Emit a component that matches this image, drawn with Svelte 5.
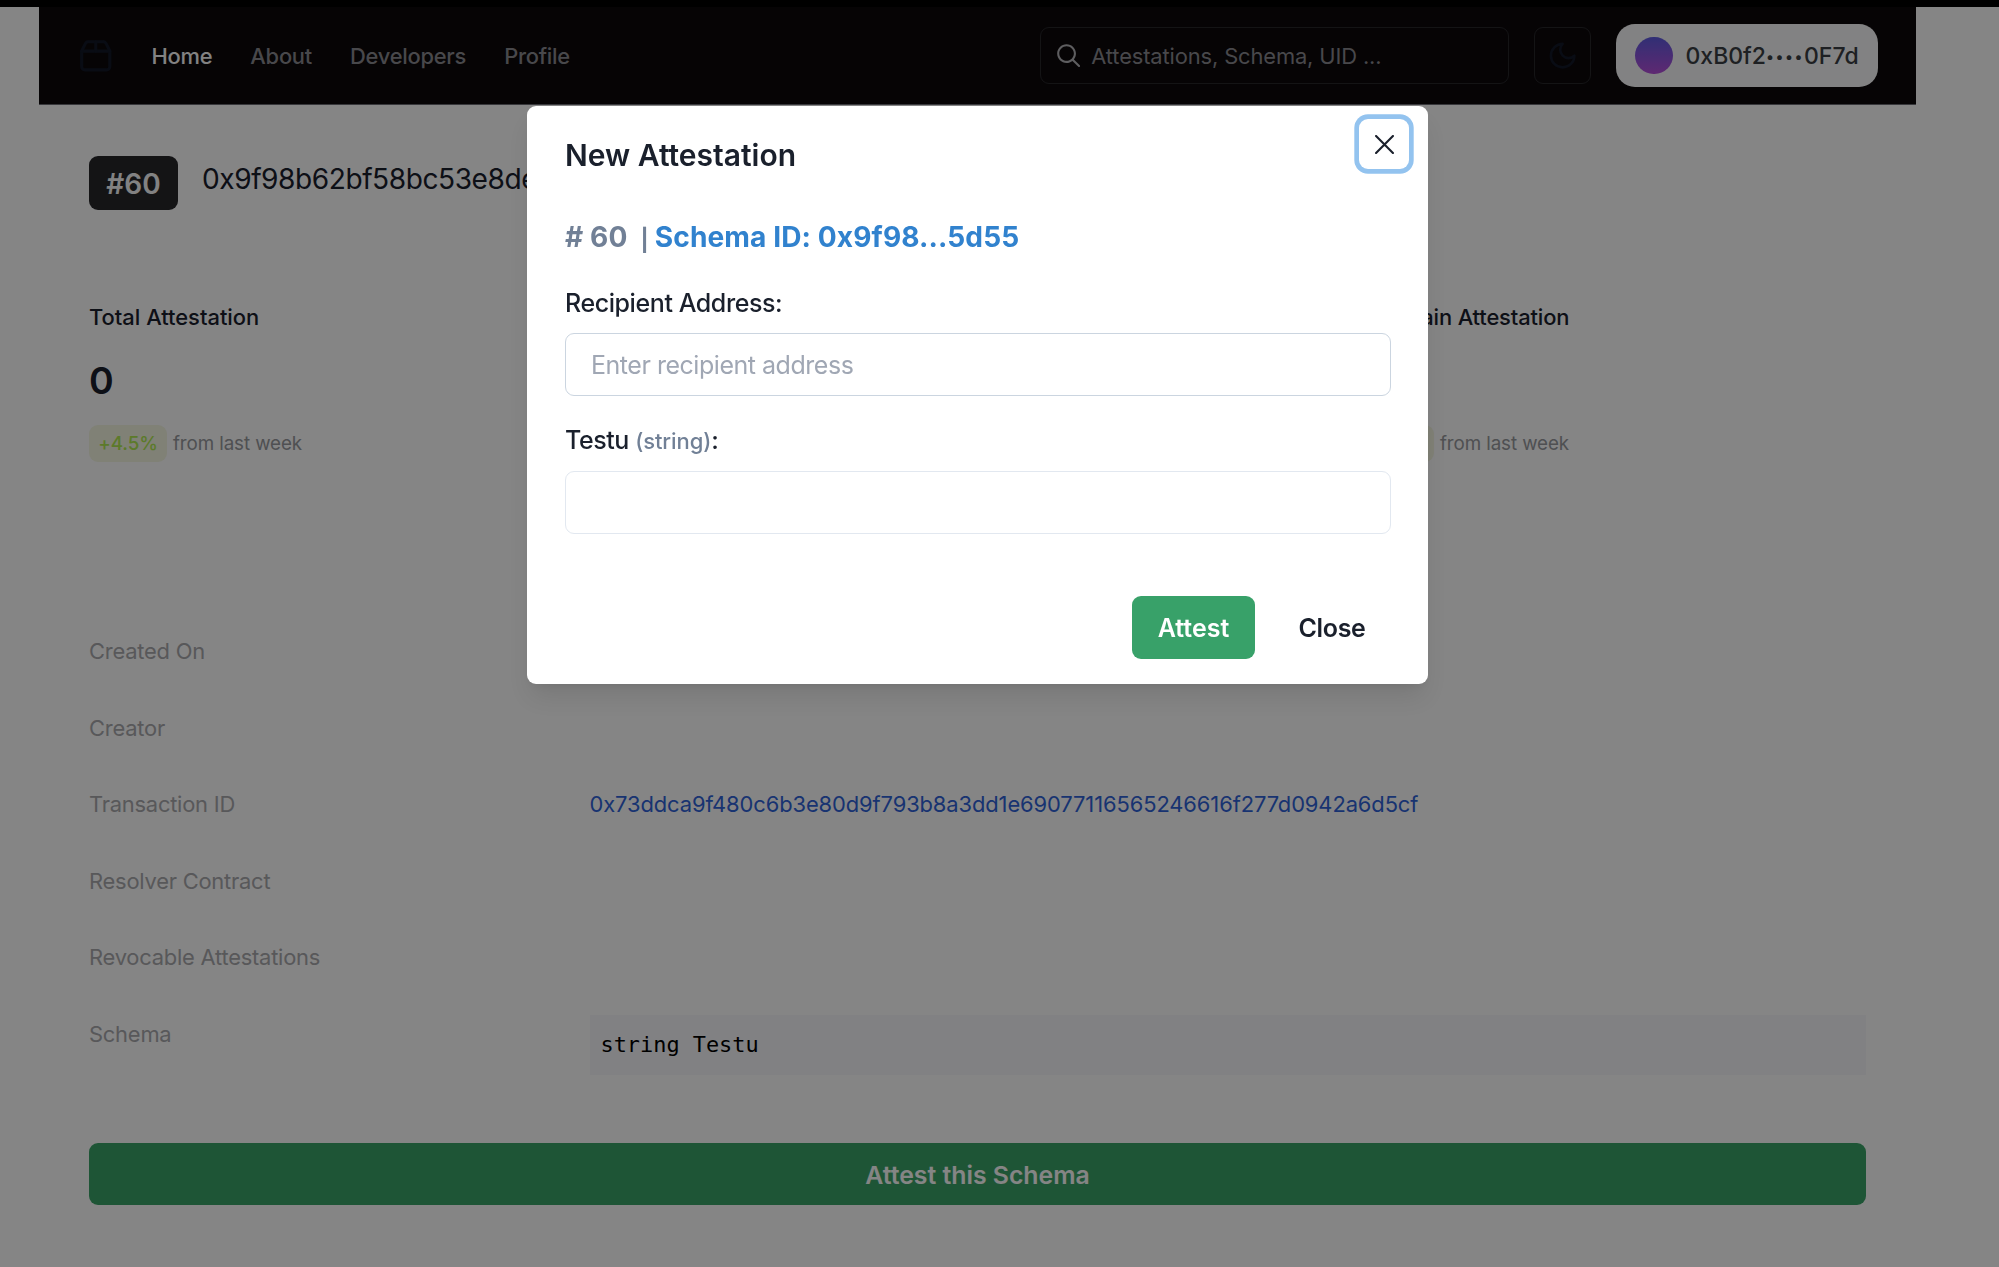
<script>
  const nav = ['Home', 'About', 'Developers', 'Profile'];
  const stats = [
    { label: 'Total Attestation', value: '0' },
    { label: 'On-chain Attestation', value: '' }
  ];
  const details = [
    { label: 'Created On' },
    { label: 'Creator' },
    { label: 'Transaction ID', link: '0x73ddca9f480c6b3e80d9f793b8a3dd1e69077116565246616f277d0942a6d5cf' },
    { label: 'Resolver Contract' },
    { label: 'Revocable Attestations' },
    { label: 'Schema', code: 'string Testu' }
  ];
</script>

<div class="page">
  <header>
    <svg class="logo" viewBox="0 0 24 24" fill="none" stroke="currentColor" stroke-width="2" stroke-linecap="round" stroke-linejoin="round">
      <path d="M3 9h18v10a2 2 0 0 1-2 2H5a2 2 0 0 1-2-2V9Z" />
      <path d="m3 9 2.45-4.9A2 2 0 0 1 7.24 3h9.52a2 2 0 0 1 1.8 1.1L21 9" />
      <path d="M12 3v6" />
    </svg>
    <nav>
      {#each nav as item, i}
        <span class:active={i === 0}>{item}</span>
      {/each}
    </nav>
    <div class="search">
      <svg viewBox="0 0 15 15" fill="currentColor">
        <path fill-rule="evenodd" clip-rule="evenodd" d="M10 6.5C10 8.433 8.433 10 6.5 10C4.567 10 3 8.433 3 6.5C3 4.567 4.567 3 6.5 3C8.433 3 10 4.567 10 6.5ZM9.309 10.016C8.53 10.632 7.544 11 6.5 11C4.015 11 2 8.985 2 6.5C2 4.015 4.015 2 6.5 2C8.985 2 11 4.015 11 6.5C11 7.544 10.632 8.53 10.016 9.309L12.854 12.146C13.049 12.342 13.049 12.658 12.854 12.854C12.658 13.049 12.342 13.049 12.146 12.854L9.309 10.016Z" />
      </svg>
      <span>Attestations, Schema, UID ...</span>
    </div>
    <div class="theme">
      <svg viewBox="0 0 24 24" fill="none" stroke="currentColor" stroke-width="2" stroke-linecap="round" stroke-linejoin="round">
        <path d="M12 3a6 6 0 0 0 9 9 9 9 0 1 1-9-9Z" />
      </svg>
    </div>
    <div class="wallet"><i></i><span>0xB0f2<em>••••</em>0F7d</span></div>
  </header>

  <main>
    <div class="heading">
      <span class="num">#60</span>
      <span class="hash">0x9f98b62bf58bc53e8de</span>
    </div>

    <div class="stats">
      {#each stats as s}
        <div class="stat">
          <div class="stat-label">{s.label}</div>
          <div class="stat-value">{s.value}</div>
          <div class="trend"><b>+4.5%</b><span>from last week</span></div>
        </div>
      {/each}
    </div>

    <div class="details">
      {#each details as d}
        <div class="row">
          <span class="key">{d.label}</span>
          {#if d.link}<span class="link">{d.link}</span>{/if}
          {#if d.code}<code>{d.code}</code>{/if}
        </div>
      {/each}
    </div>

    <button class="attest-schema">Attest this Schema</button>
  </main>
</div>

<div class="overlay"></div>

<section class="modal">
  <button class="x" aria-label="Close dialog">
    <svg viewBox="0 0 18 18" fill="none" stroke="currentColor" stroke-width="2" stroke-linecap="round">
      <path d="M1 1 17 17M17 1 1 17" />
    </svg>
  </button>
  <h2>New Attestation</h2>
  <div class="schema"><span class="id"># 60</span><span class="bar">|</span><span class="sid">Schema ID: 0x9f98...5d55</span></div>
  <label class="field">
    <span class="lab">Recipient Address:</span>
    <input placeholder="Enter recipient address" />
  </label>
  <label class="field soft">
    <span class="lab">Testu <small>(string)</small>:</span>
    <input />
  </label>
  <div class="actions">
    <button class="attest">Attest</button>
    <button class="close">Close</button>
  </div>
</section>

<style>
  :global(body) {
    margin: 0;
    overflow: hidden;
    background: #fff;
    font-family: Inter, 'Liberation Sans', sans-serif;
  }
  .page {
    box-sizing: border-box;
    width: 1999px;
    height: 1267px;
    padding: 0 83px 0 39px;
    border-top: 7px solid #000;
    color: #1a202c;
    overflow: hidden;
  }
  button, input {
    font-family: inherit;
    border: 0;
    margin: 0;
    padding: 0;
    box-sizing: border-box;
  }
  svg { display: block; flex: none; }

  header {
    box-sizing: border-box;
    height: 98px;
    padding: 0 38px;
    display: flex;
    align-items: center;
    background: #0c080a;
    border-bottom: 1px solid #6b6b73;
    font-size: 21.9px;
  }
  .logo { width: 37.5px; height: 37.5px; color: #121827; }
  nav {
    display: flex;
    gap: 38px;
    margin-left: 37px;
    color: #8b8b91;
    font-weight: 500;
    letter-spacing: -0.25px;
  }
  nav .active { color: #fafafa; }
  .search, .theme {
    box-sizing: border-box;
    height: 57px;
    border: 1.5px solid #27272a;
    border-radius: 9px;
    display: flex;
    align-items: center;
  }
  .search {
    width: 469px;
    margin-left: auto;
    padding-left: 12px;
    color: #8b8b91;
    letter-spacing: -0.13px;
  }
  .search svg { width: 31.3px; height: 31.3px; color: #b4b4b8; margin-right: 7px; }
  .search span { padding-top: 1px; }
  .theme {
    width: 57px;
    margin-left: 25px;
    justify-content: center;
    color: #121827;
  }
  .theme svg { width: 31.3px; height: 31.3px; }
  .wallet {
    box-sizing: border-box;
    width: 262px;
    height: 63px;
    margin-left: 25px;
    padding-left: 19px;
    display: flex;
    align-items: center;
    gap: 13px;
    border-radius: 19px;
    background: #f9fafb;
    color: #3a3e43;
    font-size: 23px;
    font-weight: 500;
    white-space: nowrap;
  }
  .wallet span { line-height: 30px; padding-top: 1px; }
  .wallet em { font-size: 15px; letter-spacing: 1.5px; font-style: normal; line-height: 1; vertical-align: 2px; }
  .wallet i {
    width: 37.5px;
    height: 37.5px;
    flex: none;
    border-radius: 50%;
    background: linear-gradient(#5d5ae0, #b64fda);
  }

  main { padding: 51px 50px 0; }
  .heading { display: flex; height: 54px; gap: 24px; }
  .num {
    box-sizing: border-box;
    width: 89px;
    height: 54px;
    line-height: 56px;
    border-radius: 9px;
    background: #27272a;
    color: #fafafa;
    font-size: 28px;
    font-weight: 600;
    text-align: center;
  }
  .hash { font-size: 28.1px; line-height: 47px; letter-spacing: -0.45px; }

  .stats {
    margin-top: 90px;
    display: grid;
    grid-template-columns: 1267px 1fr;
  }
  .stat-label { font-size: 21.9px; line-height: 34px; font-weight: 500; }
  .stat + .stat .stat-label { letter-spacing: -0.13px; }
  .stat-value { height: 50px; margin-top: 22px; font-size: 37.5px; line-height: 50px; font-weight: 600; }
  .trend { display: flex; align-items: center; gap: 6px; margin-top: 19px; font-size: 18.8px; letter-spacing: -0.1px; color: #97999e; }
  .trend b {
    box-sizing: border-box;
    width: 78px;
    height: 37px;
    line-height: 37px;
    text-align: center;
    border-radius: 9px;
    background: #f5f7e2;
    color: #b0ea52;
    font-weight: 500;
  }

  .details { margin-top: 172px; }
  .row {
    display: grid;
    grid-template-columns: 500.5px 1fr;
    height: 76.6px;
    font-size: 21.9px;
    line-height: 34px;
  }
  .key { color: #a9a9ad; letter-spacing: -0.22px; }
  .link { grid-column: 2; color: #2f63d8; letter-spacing: -0.09px; }
  code {
    height: 60px;
    margin-top: -2px;
    padding-left: 11px;
    line-height: 59px;
    background: #f8f8fc;
    color: #000;
    font-family: 'DejaVu Sans Mono', monospace;
  }
  .attest-schema {
    display: block;
    width: 100%;
    height: 62.5px;
    margin-top: 49.2px;
    padding-top: 1px;
    border-radius: 9px;
    background: #3ba468;
    color: #fff;
    font-size: 24.8px;
    font-weight: 600;
  }

  .overlay { position: fixed; inset: 0; background: rgba(0, 0, 0, 0.48); }

  .modal {
    position: absolute;
    left: 527px;
    top: 106px;
    box-sizing: border-box;
    width: 901px;
    height: 577.5px;
    padding: 24px 38px 25px;
    border-radius: 9px;
    background: #fff;
    color: #1a202c;
    box-shadow: 0 16px 24px -5px rgba(0, 0, 0, 0.1), 0 6px 10px -3px rgba(0, 0, 0, 0.05);
  }
  .x {
    position: absolute;
    right: 19px;
    top: 13px;
    width: 50px;
    height: 50px;
    display: grid;
    place-items: center;
    border-radius: 9px;
    background: #fff;
    color: #1a202c;
    box-shadow: 0 0 0 4.7px #93c3ef;
  }
  .x svg { width: 19px; height: 19px; }
  h2 { margin: 0; font-size: 30px; line-height: 51px; font-weight: 600; }
  .schema {
    display: flex;
    margin-top: 34px;
    font-size: 28.1px;
    line-height: 45px;
    font-weight: 700;
    letter-spacing: 0.1px;
    color: #718096;
  }
  .bar { margin: 3px 6px -3px 13px; font-size: 22px; }
  .sid { color: #3182ce; letter-spacing: 0.1px; }
  .field { display: block; margin-top: 23px; }
  .lab { display: block; height: 38px; line-height: 40px; font-size: 25px; font-weight: 500; letter-spacing: -0.42px; }
  .field input {
    display: block;
    width: 825.5px;
    height: 63px;
    margin-top: 12px;
    padding: 0 25px;
    border: 1.6px solid #cbd5e0;
    border-radius: 9px;
    background: #fff;
    font-size: 25px;
    letter-spacing: -0.47px;
  }
  .field input::placeholder { color: #a0a7b4; opacity: 1; }
  .field + .field { margin-top: 25px; }
  .soft .lab { line-height: 39px; }
  .soft input { border-color: #e2e8f0; }
  .lab small { font-size: 22px; font-weight: 500; letter-spacing: -0.1px; color: #718096; }
  .actions { display: flex; justify-content: flex-end; margin-top: 62px; gap: 19px; }
  .actions button { height: 63px; border-radius: 9px; font-size: 25px; font-weight: 600; }
  .attest { width: 123px; background: #38a169; color: #fff; }
  .actions .close { width: 116px; background: none; color: #1a202c; letter-spacing: -0.3px; }
</style>
